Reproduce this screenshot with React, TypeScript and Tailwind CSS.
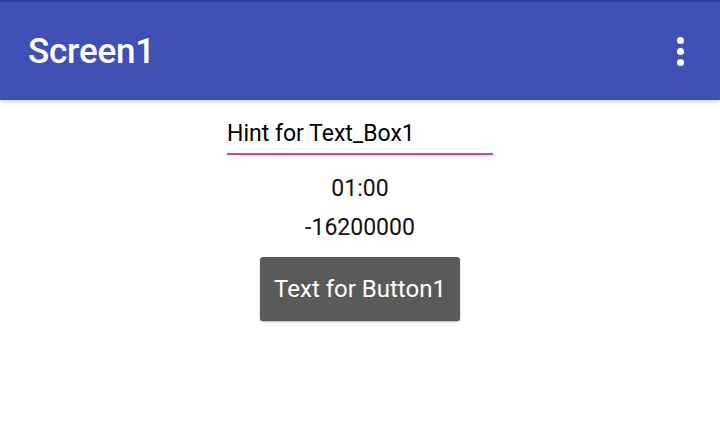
export default function App() {
  return (
    <div className="w-[720px] h-[427px] bg-white overflow-hidden font-['Roboto',sans-serif]">
      {/* app bar */}
      <div className="relative h-[100px] bg-[#3f51b5] border-t-2 border-[#303f9f] flex items-center justify-between pl-[28px] pr-[36px] shadow-[0_2px_4px_rgba(0,0,0,0.18)]">
        <span className="mt-[2px] text-white text-[35px] leading-[40px] font-medium tracking-[-0.2px]">Screen1</span>
        <div className="flex flex-col gap-[4px]">
          <span className="w-[7px] h-[7px] rounded-full bg-white" />
          <span className="w-[7px] h-[7px] rounded-full bg-white" />
          <span className="w-[7px] h-[7px] rounded-full bg-white" />
        </div>
      </div>

      {/* content */}
      <div className="flex flex-col items-center pt-[19px]">
        <div className="w-[266px] border-b-2 border-[#e2407c] pb-[4px]">
          <span className="text-[23px] text-black leading-[30px]">Hint for Text_Box1</span>
        </div>
        <div className="mt-[19px] text-[23px] text-[#111] leading-[30px]">01:00</div>
        <div className="mt-[9px] text-[23px] text-[#111] leading-[30px]">-16200000</div>
        <button className="mt-[14px] w-[200px] h-[64px] rounded-[3px] bg-[#5a5a5a] text-white text-[24px] leading-[30px] shadow-[0_1px_2px_rgba(0,0,0,0.3)]">
          Text for Button1
        </button>
      </div>
    </div>
  );
}
